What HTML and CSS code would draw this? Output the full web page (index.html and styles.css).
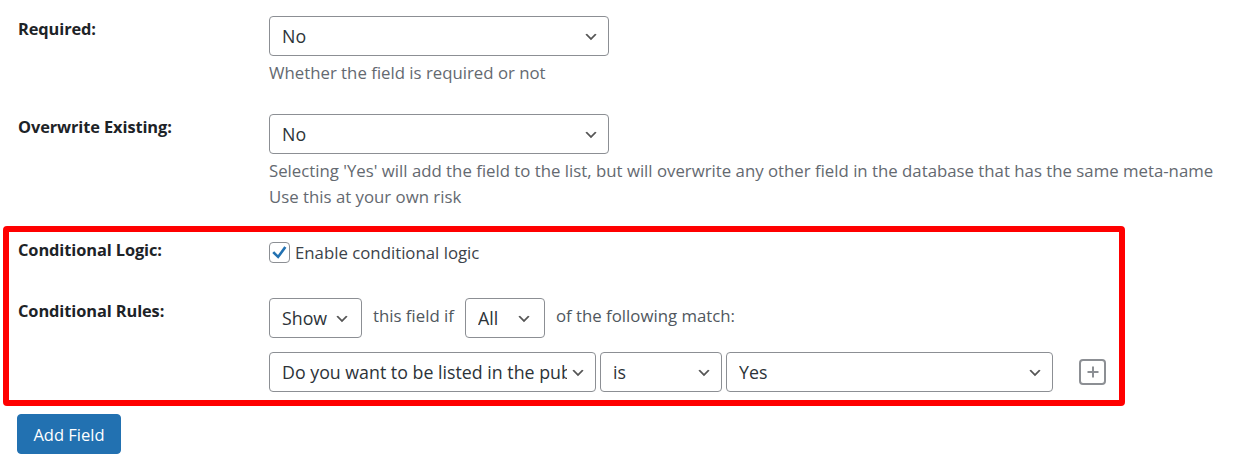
FILE: index.html
```html
<!DOCTYPE html>
<html lang="en">

<head>
    <meta charset="UTF-8">
    <meta name="viewport" content="width=device-width, initial-scale=1.0">
    <title>Field settings</title>
    <link rel="stylesheet" href="styles.css">
</head>

<body>
    <div class="form">
        <div class="row row-required">
            <div class="label">Required:</div>
            <div class="field">
                <select class="select select-wide">
                    <option>No</option>
                    <option>Yes</option>
                </select>
                <p class="desc">Whether the field is required or not</p>
            </div>
        </div>

        <div class="row row-overwrite">
            <div class="label">Overwrite Existing:</div>
            <div class="field">
                <select class="select select-wide">
                    <option>No</option>
                    <option>Yes</option>
                </select>
                <p class="desc">Selecting 'Yes' will add the field to the list, but will overwrite any other field in the database that has the same meta-name<br>Use this at your own risk</p>
            </div>
        </div>

        <div class="highlight">
            <div class="row row-logic">
                <div class="label">Conditional Logic:</div>
                <div class="field">
                    <label class="check">
                        <input type="checkbox" checked>
                        <span>Enable conditional logic</span>
                    </label>
                </div>
            </div>

            <div class="row row-rules">
                <div class="label">Conditional Rules:</div>
                <div class="field">
                    <div class="rule-head">
                        <select class="select select-show">
                            <option>Show</option>
                            <option>Hide</option>
                        </select>
                        <span class="text">this field if</span>
                        <select class="select select-all">
                            <option>All</option>
                            <option>Any</option>
                        </select>
                        <span class="text">of the following match:</span>
                    </div>
                    <div class="rule">
                        <select class="select select-field">
                            <option>Do you want to be listed in the public directory?</option>
                        </select>
                        <select class="select select-op">
                            <option>is</option>
                            <option>is not</option>
                        </select>
                        <select class="select select-value">
                            <option>Yes</option>
                            <option>No</option>
                        </select>
                        <a class="add-rule" href="javascript:;">
                            <svg width="14" height="14" viewBox="0 0 14 14">
                                <path d="M7 1.5v11M1.5 7h11" stroke="#8c8f94" stroke-width="2" fill="none" />
                            </svg>
                        </a>
                    </div>
                </div>
            </div>
        </div>

        <div class="actions">
            <button class="button">Add Field</button>
        </div>
    </div>
</body>

</html>
```

FILE: styles.css
```css
* {
    padding: 0;
    margin: 0;
    box-sizing: border-box;
}

body {
    font-family: "Open Sans", "Noto Sans", sans-serif;
    font-size: 16.8px;
    color: #3c434a;
    background: #fff;
}

.form {
    padding: 16px 0 0 3px;
}

.row {
    display: flex;
    padding-left: 15px;
}

.label {
    width: 251px;
    flex: none;
    font-weight: 700;
    font-size: 16.4px;
    line-height: 26px;
    color: #1d2327;
    letter-spacing: -0.1px;
}

.select {
    appearance: none;
    -webkit-appearance: none;
    height: 40px;
    padding: 0 28px 0 12px;
    border: 1px solid #8c8f94;
    border-radius: 4px;
    background: #fff url("data:image/svg+xml;charset=utf-8,%3Csvg xmlns='http://www.w3.org/2000/svg' width='20' height='20'%3E%3Cpath d='M5 6l5 5 5-5 2 1-7 7-7-7z' fill='%23555'/%3E%3C/svg%3E") no-repeat right 9px top 55%;
    background-size: 16px 16px;
    font-family: inherit;
    font-size: 17.8px;
    color: #2c3338;
    vertical-align: middle;
}

.select-wide {
    width: 340px;
}

.desc {
    margin-top: 4px;
    line-height: 26px;
    color: #646970;
}

.row-overwrite {
    margin-top: 28px;
}

.highlight {
    margin-top: 16px;
    width: 1122px;
    border: 6px solid #ff0000;
    border-radius: 4px;
    padding: 5px 0 8px;
}

.highlight .row {
    padding-left: 9px;
}

.check {
    display: flex;
    align-items: center;
    gap: 5px;
    padding-top: 5px;
    line-height: 20px;
    color: #3c434a;
}

.check input {
    appearance: none;
    -webkit-appearance: none;
    width: 21px;
    height: 21px;
    border: 1px solid #8c8f94;
    border-radius: 4px;
    background: #fff url("data:image/svg+xml;charset=utf-8,%3Csvg xmlns='http://www.w3.org/2000/svg' viewBox='0 0 20 20'%3E%3Cpath d='M15 3.4l2.3 1.7-8.6 11.6-6.3-6.1 2-2 4 3.9z' fill='%232271b1'/%3E%3C/svg%3E") no-repeat center;
    background-size: 19px 19px;
}

.row-rules {
    margin-top: 35px;
}

.rule-head {
    display: flex;
    align-items: center;
    gap: 11px;
}

.rule-head .text {
    color: #50575e;
    margin-top: -5px;
}

.select-show {
    width: 93px;
    background-position: right 11px top 55%;
}

.select-all {
    width: 80px;
    background-position: right 12px top 55%;
}

.rule {
    display: flex;
    align-items: center;
    gap: 4px;
    margin-top: 14px;
}

.select-field {
    width: 327px;
}

.select-op {
    width: 122px;
}

.select-value {
    width: 327px;
}

.add-rule {
    display: flex;
    align-items: center;
    justify-content: center;
    width: 27px;
    height: 26px;
    margin-left: 22px;
    border: 2px solid #8c8f94;
    border-radius: 4px;
}

.actions {
    padding: 8px 0 0 14px;
}

.button {
    width: 104px;
    height: 40px;
    border: 1px solid #2271b1;
    border-radius: 4px;
    background: #2271b1;
    color: #fff;
    font-family: inherit;
    font-size: 16.5px;
}
```
